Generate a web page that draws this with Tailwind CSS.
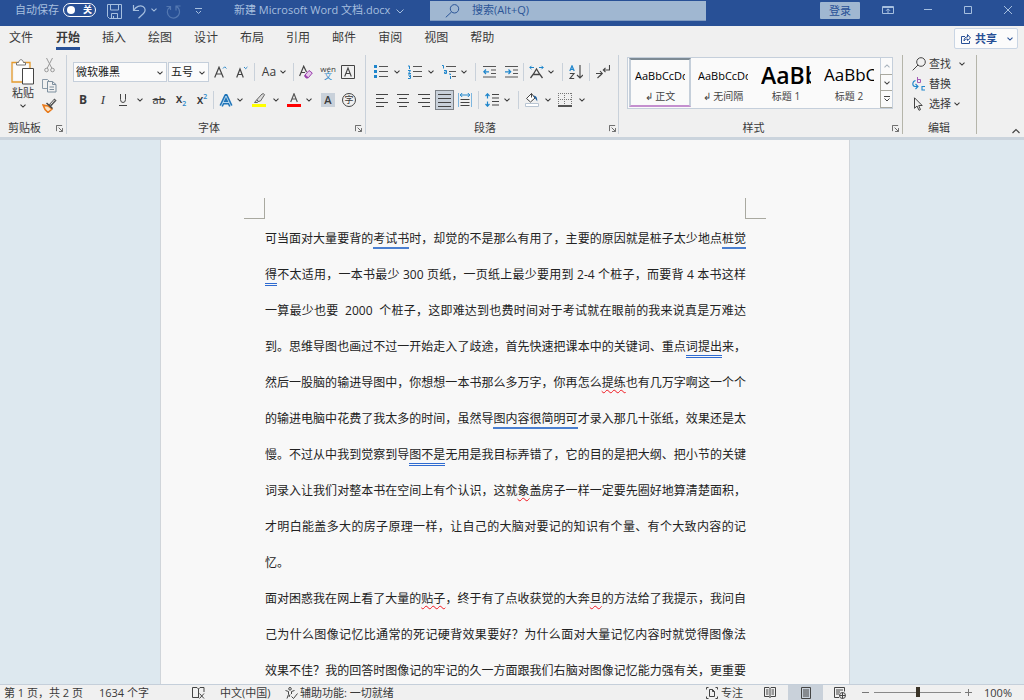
<!DOCTYPE html>
<html lang="zh-CN">
<head>
<meta charset="utf-8">
<title>新建 Microsoft Word 文档.docx</title>
<script src="https://cdn.jsdelivr.net/npm/@tailwindcss/browser@4"></script>
</head>
<body class="h-screen flex flex-col overflow-hidden bg-[#f0f0f0] text-[#3a3a3a] text-[11px] leading-4 whitespace-nowrap font-['Open_Sans','Noto_Sans_CJK_SC',sans-serif]">
<svg class="hidden">
  <symbol id="chev" viewBox="0 0 6 4"><path d="M.5 .7 3 3.1 5.500 .7" fill="none" stroke="currentColor" stroke-width="1.1"/></symbol>
  <symbol id="launch" viewBox="0 0 8 8"><path d="M.5 7V.5H7M3 3l4 4M7.500 3.500v4h-4" fill="none" stroke="#555"/></symbol>
</svg>

<!-- Title bar -->
<header class="h-[26px] shrink-0 bg-[#285096] text-[#a6bfdf] flex items-start">
  <label for="autosave" class="ml-[15px] mt-[2px] w-12">自动保存</label>
  <button id="autosave" role="switch" aria-checked="false" class="mt-[3px] w-[33px] h-[14px] rounded-full border border-white flex items-center justify-between pl-[3px] pr-[3px] text-white text-[9px] font-bold leading-3"><span class="size-2 rounded-full bg-white"></span>关</button>
  <button aria-label="保存" class="ml-[11px] mt-1"><svg class="w-[15px] h-[15px]" viewBox="0 0 15 15" fill="none" stroke="currentColor"><path d="M.5.5h14v14H2.500l-2-2zM3.500.5v5.500h8V.5M4.500 14.500V9.500h6v5M6.500 12v2.500"/></svg></button>
  <button aria-label="撤消" class="ml-[10px] mt-1"><svg class="w-[15px] h-[15px]" viewBox="0 0 15 15" fill="none" stroke="currentColor" stroke-width="1.200"><path d="M1.500 1v5.500H7M1.800 6.200C4 2.500 8 .8 11 2.500c3 2 2.500 5 .5 7L6.500 14.300"/></svg></button>
  <button aria-label="撤消选项" class="ml-1 mt-2"><svg class="w-[6px] h-1"><use href="#chev"/></svg></button>
  <button aria-label="重复" class="ml-[9px] mt-1 text-[#5478b1]"><svg class="w-[15px] h-[15px]" viewBox="0 0 15 15" fill="none" stroke="currentColor" stroke-width="1.200"><path d="M.5 2.500h4V6M4 3C0 6 1 11 4 13c4 2.500 9 0 9.500-4.500.2-2.500-1-4.800-3-6M10 6.500V2h4.500"/></svg></button>
  <button aria-label="自定义快速访问工具栏" class="ml-[14px] mt-2"><svg class="w-[7px] h-[7px]" viewBox="0 0 7 7" fill="none" stroke="currentColor"><path d="M0 .5h7M1 3l2.500 2.500L6 3"/></svg></button>
  <h1 class="ml-[32px] mt-[2px] w-[158px]">新建 Microsoft Word 文档.docx</h1>
  <button aria-label="文档选项" class="mt-[9px] ml-1"><svg class="w-2 h-[5px]" viewBox="0 0 8 5"><path d="M.5.5 4 4 7.500.5" fill="none" stroke="currentColor"/></svg></button>
  <label class="ml-[26px] mt-px h-5 flex-1 max-w-[276px] bg-[#a0b7d1] border-b border-[#7f9ac0] flex items-start text-[#2b5597]">
    <svg class="ml-[15px] mt-[3px] w-[15px] h-[14px]" viewBox="0 0 15 14" fill="none" stroke="currentColor"><circle cx="9.500" cy="4.800" r="4.200"/><path d="M6.500 8 .8 13.300"/></svg>
    <input type="text" aria-label="搜索" placeholder="搜索(Alt+Q)" class="ml-3 mt-px flex-1 min-w-0 bg-transparent outline-none placeholder:text-[#2b5597]">
  </label>
  <button class="ml-auto mt-[2px] w-10 h-[17px] bg-[#a0b7d1] text-[#285096] rounded-[1px]">登录</button>
  <button aria-label="功能区显示选项" class="ml-[22px] mt-[6px]"><svg class="w-3 h-2" viewBox="0 0 12 8" fill="none" stroke="currentColor"><path d="M.5.5h11v7H.5zM.5 1.500h11M6 7V3M4 4.800l2-2 2 2"/></svg></button>
  <button aria-label="最小化" class="ml-[30px] mt-[9px]"><svg class="w-2 h-[2px]" viewBox="0 0 8 2"><path d="M0 .5h8" stroke="currentColor"/></svg></button>
  <button aria-label="最大化" class="ml-8 mt-[6px]"><svg class="w-2 h-2" viewBox="0 0 8 8"><path d="M.5.5h7v7h-7z" fill="none" stroke="currentColor"/></svg></button>
  <button aria-label="关闭" class="ml-8 mr-[12px] mt-[6px]"><svg class="w-2 h-2" viewBox="0 0 8 8"><path d="m0 0 8 8M8 0 0 8" stroke="currentColor"/></svg></button>
</header>

<!-- Tabs -->
<nav class="h-6 shrink-0 flex items-start text-xs leading-6 pl-[9px] gap-[22px]">
  <a href="#" class="mr-px">文件</a>
  <a href="#" class="font-bold h-6 border-b-[3px] border-[#285096]">开始</a>
  <a href="#">插入</a><a href="#">绘图</a><a href="#">设计</a><a href="#">布局</a><a href="#">引用</a><a href="#">邮件</a><a href="#">审阅</a><a href="#">视图</a><a href="#">帮助</a>
  <button class="ml-auto mr-[6px] mt-[2px] w-[64px] h-[21px] bg-[#fbfbfb] border border-[#c9d5e4] rounded-[2px] text-[#285096] font-bold text-[11px] leading-4 flex items-center pl-[6px]">
    <svg class="w-[10px] h-[11px] mr-1" viewBox="0 0 10 11" fill="none" stroke="currentColor"><path d="M4 3.500H.5v7h8V8M3 8c0-3 1.500-4 3.500-4V1.500L9.500 5l-3 2.500V6C5 6 4 6.500 3 8z"/></svg>共享
    <svg class="w-[6px] h-1 ml-[10px]"><use href="#chev"/></svg>
  </button>
</nav>

<!-- Ribbon -->
<section class="h-[90px] shrink-0 flex items-start pt-[5px] border-b-[3px] border-[#cbd4dd] pr-1">
  <!-- Clipboard -->
  <div class="w-[67px] h-[79px] border-r border-[#c9d1da] flex flex-col">
    <div class="flex">
      <button class="ml-[10px] mt-1 w-[26px] flex flex-col items-center">
        <svg class="w-6 h-[26px]" viewBox="0 0 24 26" fill="none"><path d="M1 3.500h18V23H1z" stroke="#e59a2c" stroke-width="1.300"/><path d="M2.500 5h15v16.500h-15z" fill="#fbfbfb"/><path d="M5.500 6V3.500h2C8 1.500 9 .7 10 .7s2 .8 2.500 2.800h2V6z" fill="#fff" stroke="#777"/><path d="M11.500 9.500h11v15.500h-11z" fill="#fff" stroke="#444"/></svg>
        <span>粘贴</span>
        <svg class="w-[6px] h-1 mt-[3px]"><use href="#chev"/></svg>
      </button>
      <div class="ml-[6px] mt-[3px] flex flex-col gap-[5px]">
        <button aria-label="剪切"><svg class="w-[15px] h-[15px]" viewBox="0 0 15 15" fill="none" stroke="#999"><path d="M4.500 0 10 10.500M10.500 0 5 10.500"/><circle cx="4.500" cy="12" r="1.800"/><circle cx="10.500" cy="12" r="1.800"/></svg></button>
        <button aria-label="复制"><svg class="w-[15px] h-[15px]" viewBox="0 0 15 15" fill="none" stroke="#8b9aa8"><path d="M5 10.500H.5V1.500h5l2 2"/><path d="M5.500 3.500h5l3.500 3v7.500H5.500zM10.500 3.500v3H14M7.500 9h4.500M7.500 11.500h4.500" stroke="#7d8f9e"/></svg></button>
        <button aria-label="格式刷"><svg class="w-[15px] h-[15px]" viewBox="0 0 15 15"><path d="M1 7l5 1 4 3-4 3.500C4 13 2 10.500 1 7z" fill="#fbe3c4" stroke="#e8791a" stroke-width="1.500"/><path d="M4.500 5 10.500 10.500" stroke="#444" stroke-width="1.500"/><path d="m8 7.500 5.500-6" stroke="#555" stroke-width="3"/><path d="m8.500 6.500 4-4.500" stroke="#eee"/></svg></button>
      </div>
    </div>
    <div class="mt-auto h-3 leading-3 pl-2 pr-[3px] flex justify-between items-center">剪贴板<button aria-label="剪贴板选项"><svg class="size-[7px]"><use href="#launch"/></svg></button></div>
  </div>

  <!-- Font -->
  <div class="w-[299px] h-[79px] border-r border-[#c9d1da] pt-[3px] pl-[6px] flex flex-col">
    <div class="h-7 flex items-center">
      <div class="relative w-[94px]"><select aria-label="字体" class="appearance-none w-full h-5 border border-[#c5cfdb] bg-[#fbfbfb] pl-[2px] text-[#222]"><option>微软雅黑</option></select><svg class="absolute right-1 top-[9px] w-[6px] h-1 pointer-events-none"><use href="#chev"/></svg></div>
      <div class="relative w-[41px] ml-px"><select aria-label="字号" class="appearance-none w-full h-5 border border-[#c5cfdb] bg-[#fbfbfb] pl-[2px] text-[#222]"><option>五号</option></select><svg class="absolute right-1 top-[9px] w-[6px] h-1 pointer-events-none"><use href="#chev"/></svg></div>
      <button aria-label="增大字号" class="w-[22px] flex justify-center"><svg class="w-[13px] h-3" viewBox="0 0 13 12" fill="none"><path d="M.7 11.500 5 1.200l4.300 10.300M2.300 8h5.400" stroke="#444" stroke-width="1.200"/><path d="m9 2.500 1.700-1.700 1.700 1.700" stroke="#2a86c8"/></svg></button>
      <button aria-label="减小字号" class="w-[22px] flex justify-center"><svg class="w-3 h-3" viewBox="0 0 12 12" fill="none"><path d="M.7 11.500 4 3l3.300 8.500M2 8.500h4" stroke="#444" stroke-width="1.200"/><path d="m8 1 1.700 1.700L11.400 1" stroke="#2a86c8"/></svg></button>
      <i class="w-px h-[18px] bg-[#c9d1da] ml-px"></i>
      <button aria-label="更改大小写" class="w-[38px] flex items-center justify-center gap-1 text-[12px]">Aa<svg class="w-[6px] h-1"><use href="#chev"/></svg></button>
      <i class="w-px h-[18px] bg-[#c9d1da]"></i>
      <button aria-label="清除所有格式" class="w-6 flex justify-center"><svg class="w-[14px] h-[14px]" viewBox="0 0 14 14" fill="none"><path d="M.6 11 4.700 1.200 7.500 7M2.300 7.500H6" stroke="#444" stroke-width="1.200"/><path d="m6 10 4-4.500L13.300 8l-4 4.800H7.500L6 11.500z" fill="#e7c9ec" stroke="#9a3fae"/><path d="m6 10 3 2.500-1.500.5L6 11.500z" fill="#9a3fae" stroke="#9a3fae"/></svg></button>
      <button aria-label="拼音指南" class="w-5 flex flex-col items-center text-[8px] leading-[7px]"><span>wén</span><span class="text-[#2a86c8]">文</span></button>
      <button aria-label="字符边框" class="w-5 flex justify-center"><svg class="size-[14px]" viewBox="0 0 14 14" fill="none" stroke="#444"><path d="M.5.5h13v13H.5z"/><path d="M3.700 11.500 7 3l3.300 8.500M5 8.500h4" stroke-width="1.100"/></svg></button>
    </div>
    <div class="h-7 flex items-center text-xs">
      <button aria-label="加粗" class="w-5 font-bold">B</button>
      <button aria-label="倾斜" class="w-5 italic font-['Liberation_Serif',serif] text-[13px]">I</button>
      <button aria-label="下划线" class="w-5 flex justify-center"><svg class="w-2 h-3" viewBox="0 0 8 12" fill="none" stroke="#444"><path d="M1.500 0v5.500Q1.500 8.500 4 8.500T6.500 5.500V0M0 11.500h8"/></svg></button>
      <button aria-label="下划线选项" class="w-[14px] flex justify-center"><svg class="w-[6px] h-1"><use href="#chev"/></svg></button>
      <button aria-label="删除线" class="w-6 line-through text-[11px]">ab</button>
      <button aria-label="下标" class="w-5 font-semibold">x<span class="text-[7px] text-[#2a86c8] align-[-3px]">2</span></button>
      <button aria-label="上标" class="w-[22px] font-semibold">x<span class="text-[7px] text-[#2a86c8] align-[5px]">2</span></button>
      <i class="w-px h-[18px] bg-[#c9d1da]"></i>
      <button aria-label="文本效果" class="w-[23px] flex justify-center"><svg class="w-[14px] h-[13px]" viewBox="0 0 14 13" fill="none" stroke-linejoin="round"><path d="M2.200 12 7 1.800 11.800 12M4 8.500h6" stroke="#1f74b8" stroke-width="3.800"/><path d="M2.200 12 7 2l4.800 10M4 8.500h6" stroke="#d6ecfa" stroke-width=".8"/></svg></button>
      <button aria-label="文本效果选项" class="w-2"><svg class="w-[6px] h-1"><use href="#chev"/></svg></button>
      <button aria-label="突出显示" class="w-7 flex justify-center"><svg class="w-[14px] h-[14px]" viewBox="0 0 14 14" fill="none"><path d="M0 11h14v3H0z" fill="#ff0"/><path d="M5 6.500 10 1q2-1 2.500.8L8.500 8 6 8.500zM5 6.500 2.500 9.500h3L6.500 8.300" fill="#ddd" stroke="#666"/></svg></button>
      <button aria-label="突出显示选项" class="w-2"><svg class="w-[6px] h-1"><use href="#chev"/></svg></button>
      <button aria-label="字体颜色" class="w-[25px] flex justify-center"><svg class="w-[14px] h-[14px]" viewBox="0 0 14 14" fill="none"><path d="M0 11h14v3H0z" fill="#f00"/><path d="M3.700 9 7 .8 10.300 9M5 6h4" stroke="#555" stroke-width="1.200"/></svg></button>
      <button aria-label="字体颜色选项" class="w-2"><svg class="w-[6px] h-1"><use href="#chev"/></svg></button>
      <button aria-label="字符底纹" class="w-7 flex justify-center"><span class="w-[14px] h-[14px] bg-[#c9d1da] leading-[14px] font-semibold text-[11px]">A</span></button>
      <button aria-label="带圈字符" class="w-[14px] h-[14px] rounded-full border border-[#444] text-[9px] leading-3">字</button>
    </div>
    <div class="mt-auto h-3 leading-3 pr-[3px] flex items-center"><span class="flex-1 text-center pr-[10px]">字体</span><button aria-label="字体选项"><svg class="size-[7px]"><use href="#launch"/></svg></button></div>
  </div>

  <!-- Paragraph -->
  <div class="w-[253px] h-[79px] border-r border-[#c9d1da] pt-[3px] pl-[7px] flex flex-col">
    <div class="h-7 flex items-center">
      <button aria-label="项目符号" class="w-4 flex justify-center"><svg class="w-[14px] h-[14px]" viewBox="0 0 14 14"><path d="M0 0h3v3H0zM0 5h3v3H0zM0 10h3v3H0z" fill="#1f86cc"/><path d="M5 1.500h9M5 6.500h9M5 11.500h9" stroke="#555"/></svg></button>
      <button aria-label="项目符号选项" class="w-4 flex justify-center"><svg class="w-[6px] h-1"><use href="#chev"/></svg></button>
      <button aria-label="编号" class="w-5 flex justify-center"><svg class="w-[14px] h-[14px]" viewBox="0 0 14 14" fill="none"><path d="M0 1h1.500v3M0 5.500h2.500l-2 3H3M0 10h2.500v1.500H1h1.500v2H0" stroke="#1f86cc"/><path d="M5 1.500h9M5 6.500h9M5 11.500h9" stroke="#555"/></svg></button>
      <button aria-label="编号选项" class="w-3 flex justify-center"><svg class="w-[6px] h-1"><use href="#chev"/></svg></button>
      <button aria-label="多级列表" class="w-6 flex justify-center"><svg class="w-[14px] h-[14px]" viewBox="0 0 14 14" fill="none"><path d="M0 .5h1.500v3M2 5.500h2.500v3H2.500V7h2M7 9h1.500v1m0 1v3" stroke="#1f86cc"/><path d="M4 1.500h10M7 6.500h7M10 11.500h4" stroke="#555"/></svg></button>
      <button aria-label="多级列表选项" class="w-[6px]"><svg class="w-[6px] h-1"><use href="#chev"/></svg></button>
      <i class="w-px h-[18px] bg-[#c9d1da] ml-2 mr-px"></i>
      <button aria-label="减少缩进量" class="w-6 flex justify-center"><svg class="w-[13px] h-3" viewBox="0 0 13 12" fill="none"><path d="M0 .5h13M8 4h5M8 7.500h5M0 11h13" stroke="#555"/><path d="M.8 5.800H6M3 3.500.8 5.800 3 8" stroke="#1f86cc" stroke-width="1.200"/></svg></button>
      <button aria-label="增加缩进量" class="w-5 flex justify-center"><svg class="w-[13px] h-3" viewBox="0 0 13 12" fill="none"><path d="M0 .5h13M8 4h5M8 7.500h5M0 11h13" stroke="#555"/><path d="M0 5.800h5.500M3.500 3.500l2.200 2.300L3.500 8" stroke="#1f86cc" stroke-width="1.200"/></svg></button>
      <i class="w-px h-[18px] bg-[#c9d1da] ml-[2px]"></i>
      <button aria-label="中文版式" class="w-6 flex justify-center"><svg class="w-[15px] h-[14px]" viewBox="0 0 15 14" fill="none"><path d="M1.500 13 4.500 9l3-5 3 5 3 4M4.500 9.500h6" stroke="#444" stroke-width="1.300"/><path d="M.8 2.500H5M2.500.8.8 2.500l1.700 1.700M14.200 2.500H10M12.500.8l1.700 1.700-1.700 1.700" stroke="#1f86cc"/></svg></button>
      <button aria-label="中文版式选项" class="w-[6px]"><svg class="w-[6px] h-1"><use href="#chev"/></svg></button>
      <i class="w-px h-[18px] bg-[#c9d1da] ml-2"></i>
      <button aria-label="排序" class="w-[26px] flex justify-center"><svg class="w-[14px] h-[14px]" viewBox="0 0 14 14" fill="none"><path d="M.8 6 3 .8 5.200 6M1.600 4.300h2.800" stroke="#1f86cc" stroke-width="1.200"/><path d="M.8 8.500h4.200l-4 5H5.200M11 0v13M8 10l3 3 3-3" stroke="#444" stroke-width="1.100"/></svg></button>
      <i class="w-px h-[18px] bg-[#c9d1da]"></i>
      <button aria-label="显示编辑标记" class="w-[26px] flex justify-center"><svg class="w-[14px] h-[14px]" viewBox="0 0 14 14" fill="none" stroke="#444" stroke-width="1.100"><path d="M13.500 0v5H7.500M9.500 2.800 7.300 5l2.200 2.200M0 8.500h6M4 6l2.300 2.500L1.500 13M4 6l2.300 2.500L4 11"/></svg></button>
    </div>
    <div class="h-7 flex items-center">
      <button aria-label="左对齐" class="w-[18px] flex justify-center"><svg class="w-3 h-[13px]" viewBox="0 0 12 13" stroke="#444"><path d="M0 .5h12M0 4.500h8M0 8.500h12M0 12.500h8"/></svg></button>
      <button aria-label="居中" class="w-6 flex justify-center"><svg class="w-3 h-[13px]" viewBox="0 0 12 13" stroke="#444"><path d="M0 .5h12M2 4.500h8M0 8.500h12M2 12.500h8"/></svg></button>
      <button aria-label="右对齐" class="w-[18px] flex justify-center"><svg class="w-3 h-[13px]" viewBox="0 0 12 13" stroke="#444"><path d="M0 .5h12M4 4.500h8M0 8.500h12M4 12.500h8"/></svg></button>
      <button aria-label="两端对齐" aria-pressed="true" class="ml-[2px] w-[19px] h-5 border border-[#7d8287] bg-[#c9d1da] flex justify-center items-center"><svg class="w-[13px] h-[13px]" viewBox="0 0 13 13" stroke="#444"><path d="M0 .5h13M0 4.500h13M0 8.500h13M0 12.500h13"/></svg></button>
      <button aria-label="分散对齐" class="w-[22px] flex justify-center"><svg class="w-[14px] h-[14px]" viewBox="0 0 14 14" fill="none"><path d="M.5 0v14M13.500 0v14" stroke="#7db6df"/><path d="M2 2h10M4.200 0l-2 2 2 2M9.800 0l2 2-2 2" stroke="#1f86cc"/><path d="M2.500 6.500h9M2.500 9.500h9M2.500 12.500h9" stroke="#444"/></svg></button>
      <i class="w-px h-[18px] bg-[#c9d1da] ml-[2px]"></i>
      <button aria-label="行距" class="w-[25px] flex justify-center"><svg class="w-[14px] h-[14px]" viewBox="0 0 14 14" fill="none"><path d="M2.500 1v4.500m0 3V13M.5 3l2-2.200 2 2.200M.5 11l2 2.200 2-2.200" stroke="#1f86cc" stroke-width="1.200"/><path d="M7 1.500h7M7 5h7M7 8.500h7M7 12h7" stroke="#444"/></svg></button>
      <button aria-label="行距选项" class="w-[6px]"><svg class="w-[6px] h-1"><use href="#chev"/></svg></button>
      <i class="w-px h-[18px] bg-[#c9d1da] ml-2"></i>
      <button aria-label="底纹" class="w-[26px] flex justify-center"><svg class="w-[14px] h-[14px]" viewBox="0 0 14 14" fill="none"><path d="m1.500 5.500 5-5 3.500 4.500-4.500 4zM6.500.5v4" fill="#fff" stroke="#444"/><path d="M8.500 2.500q4 0 3.800 6L9.500 4.500z" fill="#1f5f9e"/><path d="M.5 10.500h13v3H.5z" fill="#fff" stroke="#b9c5d2"/></svg></button>
      <button aria-label="底纹选项" class="w-[6px]"><svg class="w-[6px] h-1"><use href="#chev"/></svg></button>
      <button aria-label="边框" class="w-7 flex justify-center"><svg class="w-[14px] h-[14px]" viewBox="0 0 14 14" fill="none"><path d="M0 .5h14M0 6.500h14M.5 0v12M6.500 0v12M13.500 0v12" stroke="#777" stroke-dasharray="1 1"/><path d="M0 13h14" stroke="#222" stroke-width="1.500"/></svg></button>
      <button aria-label="边框选项" class="w-[6px]"><svg class="w-[6px] h-1"><use href="#chev"/></svg></button>
    </div>
    <div class="mt-auto h-3 leading-3 pr-[2px] flex items-center"><span class="flex-1 text-center pr-[12px]">段落</span><button aria-label="段落选项"><svg class="size-[7px]"><use href="#launch"/></svg></button></div>
  </div>

  <!-- Styles -->
  <div class="w-[284px] h-[79px] border-r border-[#b5b5aa] pt-[2px] pl-2 flex flex-col">
    <div class="w-[266px] h-[52px] border border-[#c5cfdb] bg-[#fafafa] flex text-black">
      <div class="flex-1 flex gap-px pl-px">
        <button class="w-[62px] h-[49px] px-1 border-2 border-t-[#7d8a94] border-x-[#c5cfda] border-b-[#c48fcf]"><span class="block h-[26px] leading-7 text-[11px] overflow-hidden text-left">AaBbCcDd</span><span class="block text-[10px] leading-4 text-[#444]">↲ 正文</span></button>
        <button class="w-[62px] h-[49px] px-[6px]"><span class="block h-[26px] leading-7 text-[11px] overflow-hidden text-left">AaBbCcDd</span><span class="block text-[10px] leading-4 text-[#444]">↲ 无间隔</span></button>
        <button class="w-[62px] h-[49px] px-[6px]"><span class="block h-[26px] leading-[26px] text-[23px] font-semibold overflow-hidden text-left">AaBb</span><span class="block text-[10px] leading-4 text-[#444]">标题 1</span></button>
        <button class="w-[62px] h-[49px] px-[6px]"><span class="block h-[26px] leading-[26px] text-[17px] overflow-hidden text-left">AaBbC</span><span class="block text-[10px] leading-4 text-[#444]">标题 2</span></button>
      </div>
      <div class="w-3 flex flex-col text-[#444]">
        <button aria-label="上一行" class="flex-1 flex items-center justify-center border-l border-[#c5cfdb] text-[#a8b3bd]"><svg class="w-[6px] h-1 rotate-180"><use href="#chev"/></svg></button>
        <button aria-label="下一行" class="flex-1 flex items-center justify-center border border-r-0 border-[#a9a9a0]"><svg class="w-[6px] h-1"><use href="#chev"/></svg></button>
        <button aria-label="更多样式" class="flex-1 flex items-center justify-center border border-r-0 border-t-0 border-[#a9a9a0]"><svg class="w-[6px] h-[6px]" viewBox="0 0 6 6" fill="none" stroke="currentColor"><path d="M0 .5h6M.5 2.500 3 5l2.500-2.500"/></svg></button>
      </div>
    </div>
    <div class="mt-auto h-3 leading-3 pr-[3px] flex items-center"><span class="flex-1 text-center pr-[12px]">样式</span><button aria-label="样式选项"><svg class="size-[7px]"><use href="#launch"/></svg></button></div>
  </div>

  <!-- Editing -->
  <div class="w-[74px] h-[79px] border-r border-[#b5b5aa] flex flex-col pl-[9px]">
    <button class="h-[18px] flex items-center"><svg class="w-[14px] h-[14px] mr-[3px]" viewBox="0 0 14 14" fill="none" stroke="#444"><circle cx="9" cy="5" r="4.300"/><path d="M6 8 .7 13.300"/></svg>查找<svg class="w-[6px] h-1 ml-2"><use href="#chev"/></svg></button>
    <button class="h-5 mt-px flex items-center"><svg class="w-[14px] h-[14px] mr-[3px]" viewBox="0 0 14 14" fill="none"><path d="M5.500 0v5.500h3V2.500h-3" stroke="#a35bb5"/><path d="M13 9.500h-3v3.500h3M3.500 3.500C0 4.500 0 9 3 9.500h2.500M3.500 7 6 9.500 3.500 12" stroke="#1f86cc" stroke-width="1.100"/></svg>替换</button>
    <button class="h-5 flex items-center"><svg class="w-[14px] h-[14px] mr-[3px]" viewBox="0 0 14 14" fill="none" stroke="#444"><path d="M2.500.8v10.500L5 9l2 4.300 1.500-.7L6.700 8.500h3.500z"/></svg>选择<svg class="w-[6px] h-1 ml-[3px]"><use href="#chev"/></svg></button>
    <div class="mt-auto h-3 leading-3 text-center pr-[10px]">编辑</div>
  </div>
  <button aria-label="折叠功能区" class="ml-auto self-end mb-[3px]"><svg class="w-2 h-[6px]" viewBox="0 0 8 6"><path d="M.5 5 4 1.500 7.500 5" fill="none" stroke="#444" stroke-width="1.200"/></svg></button>
</section>

<!-- Document -->
<main class="flex-1 min-h-0 overflow-hidden bg-[#dde8ef] pr-[14px]">
  <article class="mx-auto max-w-[690px] h-full overflow-hidden bg-[#f8f8f8] border-x border-[#d0d5da] px-[83px] pt-[58px] text-[#222]">
    <div class="h-[21px] flex justify-between"><i class="w-[21px] border-r border-b border-[#a9a9a0]"></i><i class="w-[21px] border-l border-b border-[#a9a9a0]"></i></div>
    <div class="ml-[21px] mr-5 pt-[2px] text-xs leading-9 [&>p>span]:block [&>p>span]:[text-align-last:justify]">
      <p>
        <span>可当面对大量要背的<u class="no-underline border-b-2 border-[#4a7fd0]">考试书</u>时，却觉的不是那么有用了，主要的原因就是桩子太少地点<u class="no-underline border-b-2 border-[#4a7fd0]">桩觉</u></span>
        <span><u class="no-underline border-b-3 border-double border-[#2f6bd0]">得</u>不太适用，一本书最少 300 页纸，一页纸上最少要用到 2-4 个桩子，而要背 4 本书这样</span>
        <span>一算最少也要&nbsp; 2000&nbsp; 个桩子，这即难达到也费时间对于考试就在眼前的我来说真是万难达</span>
        <span>到。思维导图也画过不过一开始走入了歧途，首先快速把课本中的关键词、重点<u class="no-underline border-b-3 border-double border-[#2f6bd0]">词提出</u>来，</span>
        <span>然后一股脑的输进导图中，你想想一本书那么多万字，你再怎么<u class="underline decoration-wavy decoration-1 decoration-[#f01820] underline-offset-2">提练</u>也有几万字啊这一个个</span>
        <span>的输进电脑中花费了我太多的时间，虽然导<u class="no-underline border-b-2 border-[#4a7fd0]">图内容很简明可</u>才录入那几十张纸，效果还是太</span>
        <span>慢。不过从中我到觉察到导<u class="no-underline border-b-3 border-double border-[#2f6bd0]">图不是</u>无用是我目标弄错了，它的目的是把大纲、把小节的关键</span>
        <span>词录入让我们对整本书在空间上有个认识，这就<u class="underline decoration-wavy decoration-1 decoration-[#f01820] underline-offset-2">象</u>盖房子一样一定要先圈好地算清楚面积，</span>
        <span>才明白能盖多大的房子原理一样，让自己的大脑对要记的知识有个量、有个大致内容的记</span>
        <span class="[text-align-last:left]!">忆。</span>
      </p>
      <p>
        <span>面对困惑我在网上看了大量的<u class="underline decoration-wavy decoration-1 decoration-[#f01820] underline-offset-2">贴子</u>，终于有了点收获觉的大奔<u class="underline decoration-wavy decoration-1 decoration-[#f01820] underline-offset-2">旦</u>的方法给了我提示，我问自</span>
        <span>己为什么图像记忆比通常的死记硬背效果要好？为什么面对大量记忆内容时就觉得图像法</span>
        <span>效果不佳？我的回答时图像记的牢记的久一方面跟我们右脑对图像记忆能力强有关，更重要</span>
      </p>
    </div>
  </article>
</main>

<!-- Status bar -->
<footer class="h-4 shrink-0 border-t border-[#c5cfda] flex items-center pl-1 pr-3 leading-[15px]">
  <span class="w-[95px]">第 1 页，共 2 页</span>
  <span class="w-[93px]">1634 个字</span>
  <button aria-label="校对" class="w-7"><svg class="w-[13px] h-3" viewBox="0 0 13 12" fill="none" stroke="#444"><path d="M6 10.500H.5V.5H5L6.500 2V11M6.500 2 8 .5h4V5M7.500 6.500l4.500 5M12 6.500l-4.500 5"/></svg></button>
  <button class="w-[65px] text-left">中文(中国)</button>
  <button class="flex items-center"><svg class="w-[13px] h-3 mr-[2px]" viewBox="0 0 13 12" fill="none" stroke="#444"><circle cx="5" cy="1.800" r="1.300"/><path d="M.5 3.500 3.500 4.500v3L2 11.500M9.500 3.500l-3 1v2.500M5 7.500 4 10M6.500 9.500l2 2 4-5"/></svg>辅助功能: 一切就绪</button>
  <button class="ml-auto flex items-center"><svg class="w-3 h-3 mr-[3px]" viewBox="0 0 12 12" fill="none" stroke="#444"><path d="M2.500.5h-2v2M9.500.5h2v2M.5 9.500v2h2M11.500 9.500v2h-2M3.500 2.500h3l2 2v5h-5zM6.500 2.500v2h2"/></svg>专注</button>
  <button aria-label="阅读视图" class="ml-[21px]"><svg class="w-3 h-[11px]" viewBox="0 0 12 11" fill="none" stroke="#444"><path d="M.5.5H5L6 1.500 7 .5h4.500v9H7l-1 1-1-1H.5zM6 1.500v9M2 3h2.500M2 5h2.500M2 7h2.500M7.500 3H10M7.500 5H10M7.500 7H10"/></svg></button>
  <button aria-label="页面视图" aria-pressed="true" class="ml-3 w-[35px] h-[15px] bg-[#c9d1da] flex items-center justify-center"><svg class="w-[10px] h-3" viewBox="0 0 10 12" fill="none" stroke="#444"><path d="M.5.5h9v11h-9zM2 3h6M2 5h6M2 7h6M2 9h6"/></svg></button>
  <button aria-label="Web 版式视图" class="ml-[11px]"><svg class="w-3 h-3" viewBox="0 0 12 12" fill="none" stroke="#444"><path d="M5 10.500H.5V.5h10v4M2 3h7M2 5h4M2 7h3"/><circle cx="8.500" cy="8.500" r="3"/><path d="M5.500 8.500h6M8.500 5.500v6"/></svg></button>
  <button aria-label="缩小" class="ml-4"><svg class="size-[7px]" viewBox="0 0 7 7"><path d="M0 3.500h7" stroke="#777"/></svg></button>
  <input type="range" aria-label="缩放" min="0" max="100" value="50" class="ml-[5px] w-[87px] h-3 appearance-none bg-transparent [&::-webkit-slider-runnable-track]:h-px [&::-webkit-slider-runnable-track]:bg-[#888] [&::-webkit-slider-thumb]:appearance-none [&::-webkit-slider-thumb]:w-1 [&::-webkit-slider-thumb]:h-[10px] [&::-webkit-slider-thumb]:mt-[-5px] [&::-webkit-slider-thumb]:bg-[#3a3428]">
  <button aria-label="放大" class="ml-1"><svg class="size-[7px]" viewBox="0 0 7 7"><path d="M0 3.500h7M3.500 0v7" stroke="#777"/></svg></button>
  <span class="ml-3">100%</span>
</footer>
</body>
</html>
